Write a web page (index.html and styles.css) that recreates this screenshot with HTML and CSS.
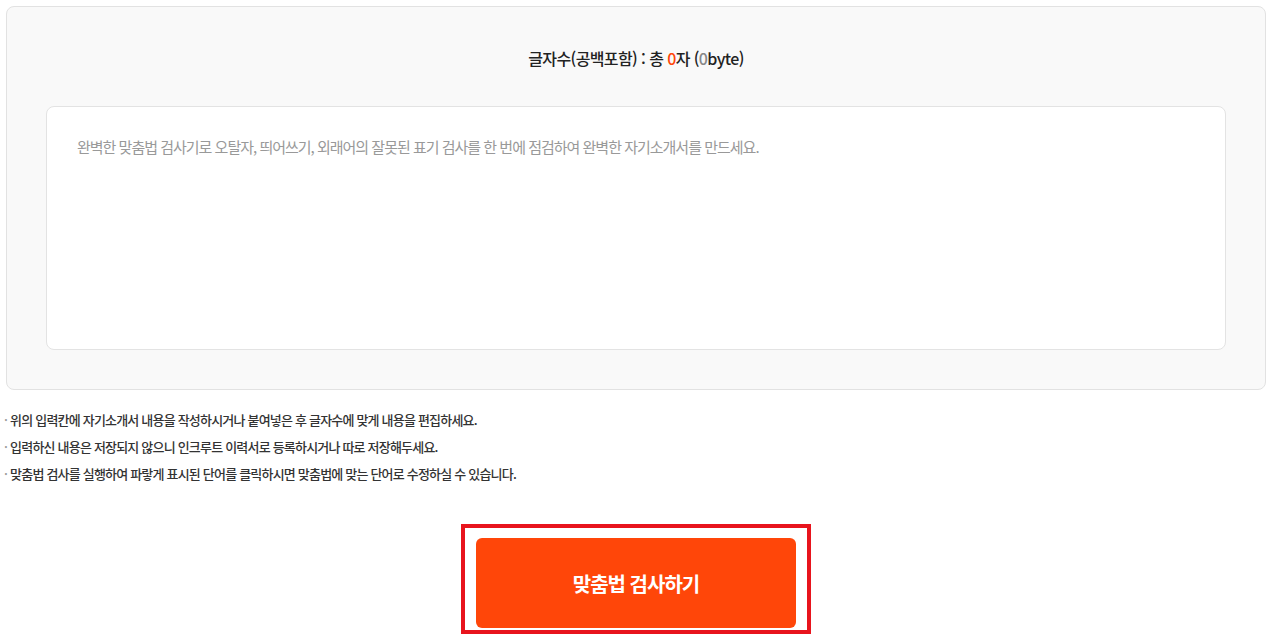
FILE: index.html
```html
<!DOCTYPE html>
<html lang="ko">

<head>
    <meta charset="UTF-8">
    <meta name="viewport" content="width=device-width, initial-scale=1.0">
    <title>맞춤법 검사기</title>
    <link rel="stylesheet" href="styles.css">
</head>

<body>

    <div class="wrap">

        <div class="check-box">
            <p class="count">글자수(공백포함) : 총 <span class="num">0</span>자 (<span class="byte">0</span>byte)</p>

            <div class="input-area">
                <p class="placeholder">완벽한 맞춤법 검사기로 오탈자, 띄어쓰기, 외래어의 잘못된 표기 검사를 한 번에 점검하여 완벽한 자기소개서를 만드세요.</p>
            </div>
        </div>

        <ul class="notes">
            <li>위의 입력칸에 자기소개서 내용을 작성하시거나 붙여넣은 후 글자수에 맞게 내용을 편집하세요.</li>
            <li>입력하신 내용은 저장되지 않으니 인크루트 이력서로 등록하시거나 따로 저장해두세요.</li>
            <li>맞춤법 검사를 실행하여 파랗게 표시된 단어를 클릭하시면 맞춤법에 맞는 단어로 수정하실 수 있습니다.</li>
        </ul>

        <div class="butt">
            <div class="highlight">
                <button class="btn">맞춤법 검사하기</button>
            </div>
        </div>

    </div>

</body>

</html>
```

FILE: styles.css
```css
*,
*::after,
*::before {
    margin: 0;
    padding: 0;
    box-sizing: border-box;
}

body {
    background: #fff;
    font-family: "Noto Sans CJK KR", "Noto Sans", sans-serif;
    color: #222;
}

.wrap {
    padding: 6px 6px 0 6px;
}

.check-box {
    background: #f9f9f9;
    border: 1px solid #e2e2e2;
    border-radius: 8px;
    padding: 38px 39px 39px 39px;
    height: 384px;
}

.count {
    text-align: center;
    font-size: 16px;
    font-weight: 500;
    letter-spacing: -0.6px;
    line-height: 26px;
    color: #222;
}

.count .num {
    color: #ff4609;
}

.count .byte {
    color: #888;
}

.input-area {
    margin-top: 35px;
    background: #fff;
    border: 1px solid #e3e3e3;
    border-radius: 8px;
    height: 244px;
    padding: 28px 30px;
}

.placeholder {
    font-size: 15px;
    letter-spacing: -1px;
    color: #999;
    line-height: 24px;
}

.notes {
    list-style: none;
    margin: 16px 0 0 -2px;
}

.notes li {
    font-size: 13px;
    font-weight: 500;
    letter-spacing: -0.8px;
    color: #333;
    line-height: 27px;
}

.notes li::before {
    content: "·";
    color: #999;
    margin-right: 3px;
}

.butt {
    display: flex;
    justify-content: center;
    margin-top: 37px;
}

.highlight {
    border: 4px solid #e8141d;
    padding: 10px 11px 2px 11px;
    width: 350px;
    height: 110px;
}

.btn {
    width: 320px;
    height: 90px;
    background: #ff4609;
    border: none;
    border-radius: 6px;
    color: #fff;
    font-family: "Noto Sans CJK KR", sans-serif;
    font-size: 20px;
    font-weight: 700;
    letter-spacing: -1px;
}
```
